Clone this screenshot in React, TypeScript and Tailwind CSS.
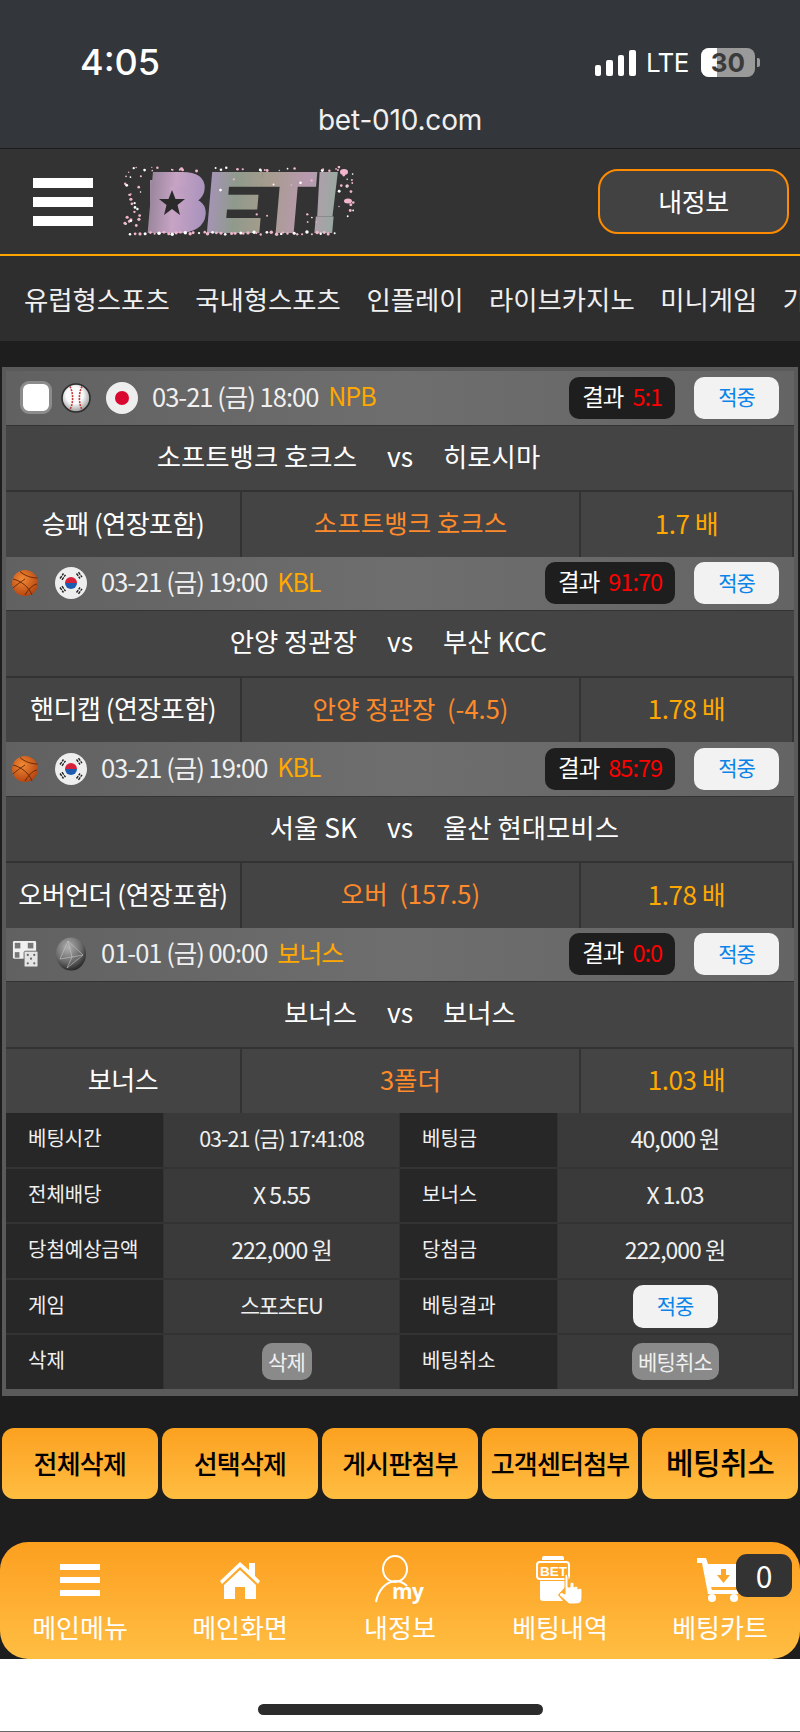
import React from 'react';

const KR = { fontFamily: '"Noto Sans CJK KR", sans-serif' };

type Game = {
  sport: 'baseball' | 'basketball' | 'bonus';
  flag: 'jp' | 'kr' | 'world';
  date: string;
  league: string;
  score: string;
  home: string;
  away: string;
  market: string;
  pick: string;
  odds: string;
  check?: boolean;
};

const GAMES: Game[] = [
  { sport: 'baseball', flag: 'jp', date: '03-21 (금) 18:00', league: 'NPB', score: '5:1', home: '소프트뱅크 호크스', away: '히로시마', market: '승패 (연장포함)', pick: '소프트뱅크 호크스', odds: '1.7 배', check: true },
  { sport: 'basketball', flag: 'kr', date: '03-21 (금) 19:00', league: 'KBL', score: '91:70', home: '안양 정관장', away: '부산 KCC', market: '핸디캡 (연장포함)', pick: '안양 정관장  (-4.5)', odds: '1.78 배' },
  { sport: 'basketball', flag: 'kr', date: '03-21 (금) 19:00', league: 'KBL', score: '85:79', home: '서울 SK', away: '울산 현대모비스', market: '오버언더 (연장포함)', pick: '오버  (157.5)', odds: '1.78 배' },
  { sport: 'bonus', flag: 'world', date: '01-01 (금) 00:00', league: '보너스', score: '0:0', home: '보너스', away: '보너스', market: '보너스', pick: '3폴더', odds: '1.03 배' },
];

const DOTS: [number, number, number][] = (() => {
  const out: [number, number, number][] = [];
  let s = 7;
  const rnd = () => {
    s = (s * 16807) % 2147483647;
    return s / 2147483647;
  };
  for (let i = 0; i < 46; i++) out.push([8 + i * 4.5 + rnd() * 3, 66 + rnd() * 2.5, 1 + rnd() * 0.8]);
  for (let i = 0; i < 30; i++) out.push([6 + rnd() * 220, 1 + rnd() * 4, 0.7 + rnd() * 0.8]);
  for (let i = 0; i < 26; i++) out.push([1 + rnd() * 18, 6 + rnd() * 56, 0.7 + rnd() * 0.9]);
  for (let i = 0; i < 16; i++) out.push([215 + rnd() * 17, 8 + rnd() * 52, 0.7 + rnd() * 1]);
  for (let i = 0; i < 12; i++) out.push([90 + rnd() * 110, 12 + rnd() * 46, 0.7 + rnd() * 0.7]);
  return out;
})();

function Logo() {
  return (
    <svg width="234" height="71" viewBox="0 0 234 71" className="ml-[29px] shrink-0">
      <defs>
        <linearGradient id="photo" gradientUnits="userSpaceOnUse" x1="20" x2="222" y1="0" y2="0">
          <stop offset="0" stopColor="#8f7f93" />
          <stop offset="0.15" stopColor="#c7a3c4" />
          <stop offset="0.3" stopColor="#a993bd" />
          <stop offset="0.45" stopColor="#8f9a8c" />
          <stop offset="0.6" stopColor="#a59c8c" />
          <stop offset="0.8" stopColor="#b99ab0" />
          <stop offset="1" stopColor="#8fae9c" />
        </linearGradient>
        <filter id="soft">
          <feGaussianBlur stdDeviation="0.5" />
        </filter>
      </defs>
      <g filter="url(#soft)">
        <rect x="28" y="14" width="44" height="46" fill="url(#photo)" />
        <text
          x="24"
          y="64"
          fontSize="80"
          fontWeight="700"
          transform="skewX(-5) translate(5 0)"
          fontFamily="Liberation Sans, sans-serif"
          fill="url(#photo)"
          stroke="url(#photo)"
          strokeWidth="6"
          textLength="192"
          lengthAdjust="spacingAndGlyphs"
        >
          BET!
        </text>
        <polygon points="50,24 53.500,33 63,33 55.500,39 58,49 50,43 42,49 44.500,39 37,33 46.500,33" fill="#2b2b2b" />
        {DOTS.map(([x, y, r], i) => (
          <circle key={i} cx={x} cy={y} r={r} fill={i % 3 === 0 ? '#ffffff' : '#f2b6cc'} />
        ))}
        <ellipse cx="222" cy="6" rx="4" ry="3" fill="#f2b6cc" />
        <ellipse cx="226" cy="35" rx="4" ry="2.500" fill="#f2b6cc" />
      </g>
    </svg>
  );
}

function SportIcon({ type }: { type: Game['sport'] }) {
  if (type === 'baseball') {
    return (
      <svg width="30" height="30" viewBox="0 0 30 30" className="shrink-0">
        <defs>
          <radialGradient id="bb" cx="0.45" cy="0.4" r="0.6">
            <stop offset="0.5" stopColor="#fbfbfb" />
            <stop offset="1" stopColor="#9a9a9a" />
          </radialGradient>
        </defs>
        <circle cx="15" cy="15" r="14" fill="url(#bb)" stroke="#2e2e2e" strokeWidth="1.600" />
        <path d="M9 3.500C12.500 10 12.500 20 9 26.500M21 3.500C17.500 10 17.500 20 21 26.500" fill="none" stroke="#c23a3a" strokeWidth="1.600" strokeDasharray="2 1" />
      </svg>
    );
  }
  if (type === 'basketball') {
    return (
      <svg width="26" height="26" viewBox="0 0 26 26" className="shrink-0">
        <defs>
          <radialGradient id="bk" cx="0.4" cy="0.35" r="0.7">
            <stop offset="0" stopColor="#f28a35" />
            <stop offset="1" stopColor="#b2410e" />
          </radialGradient>
        </defs>
        <circle cx="13" cy="13" r="13" fill="url(#bk)" />
        <path d="M1 9C9 11 17 17 20 25M8 1.500C13 6 20 8 25.500 8M1 18C4 15 8 12.500 13 9M13 25C16 20 20 15 25 14" fill="none" stroke="#5d2408" strokeWidth="0.900" />
      </svg>
    );
  }
  return (
    <svg width="26" height="30" viewBox="0 0 28 30" className="shrink-0">
      <rect x="1" y="1" width="25" height="19" rx="1.500" fill="#f0f0f0" />
      <rect x="3" y="3" width="6" height="6" fill="#777777" />
      <rect x="17" y="3" width="6" height="6" fill="#777777" />
      <rect x="3" y="13" width="5" height="6" fill="#777777" />
      <rect x="13" y="12" width="15" height="17" rx="1.500" fill="#e4e4e4" stroke="#666666" strokeWidth="1" />
      <circle cx="17" cy="16" r="1.200" fill="#666666" />
      <circle cx="24" cy="16" r="1.200" fill="#666666" />
      <circle cx="20.500" cy="20" r="1.200" fill="#666666" />
      <circle cx="17" cy="25" r="1.200" fill="#666666" />
      <circle cx="24" cy="25" r="1.200" fill="#666666" />
    </svg>
  );
}

function FlagIcon({ type }: { type: Game['flag'] }) {
  if (type === 'jp') {
    return (
      <svg width="32" height="32" viewBox="0 0 32 32" className="shrink-0">
        <circle cx="16" cy="16" r="16" fill="#eeeeee" />
        <circle cx="16" cy="16" r="7" fill="#d9062f" />
      </svg>
    );
  }
  if (type === 'kr') {
    return (
      <svg width="32" height="32" viewBox="0 0 32 32" className="shrink-0">
        <circle cx="16" cy="16" r="16" fill="#eeeeee" />
        <path d="M10 16a6 6 0 0 1 12 0z" fill="#d5213a" />
        <path d="M10 16a6 6 0 0 0 12 0z" fill="#1c5bb0" />
        <g stroke="#222222" strokeWidth="1.400" strokeDasharray="3 0.800">
          <path d="M5 11.500l3.500-5M7 12.800l3.500-5" />
          <path d="M21.500 6.500l3.500 5M23.500 5.200l3.500 5" />
          <path d="M5 20.500l3.500 5M7 19.200l3.500 5" />
          <path d="M21.500 25.500l3.500-5M23.500 26.800l3.500-5" />
        </g>
      </svg>
    );
  }
  return (
    <svg width="32" height="34" viewBox="0 0 32 34" className="shrink-0">
      <defs>
        <radialGradient id="wb" cx="0.4" cy="0.3" r="0.75">
          <stop offset="0" stopColor="#b0b0b0" />
          <stop offset="0.6" stopColor="#6a6a6a" />
          <stop offset="1" stopColor="#1e1e1e" />
        </radialGradient>
      </defs>
      <ellipse cx="16" cy="17" rx="15" ry="16.500" fill="url(#wb)" />
      <path d="M5 22L13 4L28 18L12 31M13 4L17 20L5 22M17 20L28 18M17 20L12 31" fill="none" stroke="#c8c8c8" strokeWidth="0.600" />
    </svg>
  );
}

function HitButton({ className }: { className: string }) {
  return (
    <div className={`flex items-center justify-center rounded-[10px] bg-[#f2f2f2] pb-[2px] text-[21px] tracking-[-1px] text-[#0a84e8] ${className}`}>
      적중
    </div>
  );
}

function GameBlock({ game }: { game: Game }) {
  return (
    <div>
      <div className="flex h-[53.500px] items-center bg-linear-to-r from-[#616161] via-[#6e6e6e] to-[#646464]">
        {game.check ? (
          <div className="ml-[14px] mr-[9px] h-[33px] w-[32px] shrink-0 rounded-[9px] border-[3px] border-[#8c8c8c] bg-white" />
        ) : (
          <div className="ml-[5px] w-[1px] shrink-0" />
        )}
        <SportIcon type={game.sport} />
        <div className={game.check ? 'ml-[15px]' : 'ml-[17px]'}>
          <FlagIcon type={game.flag} />
        </div>
        <span className="ml-[14px] mb-[4px] whitespace-nowrap text-[25.500px] tracking-[-1px] text-[#f0f0f0]">{game.date}</span>
        <span className="ml-[10px] mb-[4px] whitespace-nowrap text-[25px] tracking-[-1px] text-[#ffa800]">{game.league}</span>
        <div className="ml-auto flex h-[42px] items-center rounded-[10px] bg-[#1e1e1e] px-[13px] pb-[3px] text-[23.500px] tracking-[-1px]">
          <span className="text-white">결과</span>
          <span className="ml-[9px] text-[#ff0000]">{game.score}</span>
        </div>
        <HitButton className="ml-[19px] mr-[15px] h-[42px] w-[85px]" />
      </div>
      <div className="flex flex-col gap-[2px] bg-[#333333] pt-[1px]">
        <div className="grid h-[64.500px] grid-cols-[1fr_auto_1fr] items-center gap-x-[30px] bg-[#444444] pb-[4px] text-[26.400px] whitespace-nowrap text-white">
          <span className="text-right">{game.home}</span>
          <span>vs</span>
          <span>{game.away}</span>
        </div>
        <div className="grid h-[64.500px] grid-cols-[234px_337px_211px] gap-x-[2px] text-[26px]">
          <div className="flex items-center justify-center bg-[#444444] pb-[4px] tracking-[-0.5px] whitespace-nowrap text-white">{game.market}</div>
          <div className="flex items-center justify-center whitespace-pre bg-[#444444] pb-[4px] text-[25.500px] text-[#ff8a2a]">{game.pick}</div>
          <div className="flex items-center justify-center bg-[#444444] pb-[4px] tracking-[-0.5px] text-[#ffa800]">{game.odds}</div>
        </div>
      </div>
    </div>
  );
}

function TableRow({ a, b, c, d }: { a: string; b: React.ReactNode; c: string; d: React.ReactNode }) {
  const label = 'flex items-center bg-[#272727] pb-[3px] pl-[22px] text-[20px] whitespace-nowrap';
  const value = 'flex items-center justify-center bg-[#3a3a3a] text-[23px] tracking-[-1px] whitespace-nowrap';
  return (
    <div className="grid h-[53.500px] grid-cols-[157px_235px_157px_234px] gap-x-[1px] text-[#f0f0f0]">
      <div className={label}>{a}</div>
      <div className={value}>{b}</div>
      <div className={label}>{c}</div>
      <div className={value}>{d}</div>
    </div>
  );
}

function GrayButton({ children, className }: { children: React.ReactNode; className: string }) {
  return <div className={`flex h-[37px] items-center justify-center rounded-[10px] bg-[#8a8a8a] text-[21px] tracking-[-0.8px] ${className}`}>{children}</div>;
}

function NavIcon({ name }: { name: string }) {
  if (name === 'menu') {
    return (
      <svg width="40" height="34" viewBox="0 0 40 34" fill="#ffffff">
        <rect y="1" width="40" height="6" />
        <rect y="14" width="40" height="6" />
        <rect y="27" width="40" height="6" />
      </svg>
    );
  }
  if (name === 'home') {
    return (
      <svg width="40" height="40" viewBox="0 0 40 40" fill="#ffffff">
        <path d="M20 2L29 10V3H35V16L40 21L38 24L20 7L2 24L0 21Z" />
        <path d="M4 25L20 10L36 25V39H25V27H15V39H4Z" />
      </svg>
    );
  }
  if (name === 'my') {
    return (
      <svg width="50" height="50" viewBox="0 0 50 50">
        <ellipse cx="20" cy="14" rx="12" ry="13" fill="none" stroke="#ffffff" strokeWidth="2" />
        <path d="M1 47C3 36 10 27 20 26C25 26 29 28 32 31" fill="none" stroke="#ffffff" strokeWidth="2" />
        <text x="17" y="44" fontSize="21" fontWeight="700" fill="#ffffff" fontFamily="Open Sans, sans-serif" letterSpacing="-0.5">
          my
        </text>
      </svg>
    );
  }
  if (name === 'bet') {
    return (
      <svg width="48" height="50" viewBox="0 0 48 50">
        <path d="M6 3Q6 1 8 1H26Q28 1 28 3V5H6Z" fill="#ffffff" />
        <rect x="1" y="7" width="32" height="17" rx="3" fill="none" stroke="#ffffff" strokeWidth="2" />
        <text x="4" y="21" fontSize="13.500" fontWeight="700" fill="#ffffff" fontFamily="Liberation Sans, sans-serif">
          BET
        </text>
        <path d="M4 26H30V31L22 40L27 46H7Q4 46 4 43Z" fill="#ffffff" />
        <path d="M29 19Q32 19 32 22V32L34 32V28Q36 26 38 28V32Q40 30 42 32V34Q44 32 46 34V43Q46 49 40 49H33L23 40L25 37L29 39Z" fill="#ffffff" stroke="#fca728" strokeWidth="1" />
      </svg>
    );
  }
  return (
    <svg width="46" height="44" viewBox="0 0 46 44" fill="#ffffff">
      <path d="M0 0H9L11 6H46V11L41 29H14L15 32H41V36H11L5 5H0Z" />
      <circle cx="15" cy="40" r="4" />
      <circle cx="37" cy="40" r="4" />
      <path d="M24 11H29V17H33L26.500 25L20 17H24Z" fill="#fca728" />
    </svg>
  );
}

const NAV = ['유럽형스포츠', '국내형스포츠', '인플레이', '라이브카지노', '미니게임', '가상게임'];
const ACTIONS = ['전체삭제', '선택삭제', '게시판첨부', '고객센터첨부'];
const BOTTOM = [
  { icon: 'menu', label: '메인메뉴' },
  { icon: 'home', label: '메인화면' },
  { icon: 'my', label: '내정보' },
  { icon: 'bet', label: '베팅내역' },
  { icon: 'cart', label: '베팅카트' },
];

export default function App() {
  return (
    <div className="flex h-[1732px] w-[800px] flex-col overflow-hidden bg-white" style={KR}>
      {/* status bar */}
      <div className="h-[149px] shrink-0 border-b border-[#1c1c1c] bg-[#33363a] font-['Inter',sans-serif]">
        <div className="flex h-[84px] items-end">
          <span className="ml-[80px] text-[36px] leading-[44px] font-medium text-white">4:05</span>
          <div className="ml-auto mb-[8px] flex items-end gap-[5px]">
            <div className="h-[11px] w-[6.500px] rounded-[2px] bg-white" />
            <div className="h-[16px] w-[6.500px] rounded-[2px] bg-white" />
            <div className="h-[21px] w-[6.500px] rounded-[2px] bg-white" />
            <div className="h-[26px] w-[6.500px] rounded-[2px] bg-white" />
          </div>
          <span className="mb-[4px] ml-[10px] text-[26px] leading-[34px] tracking-[-0.5px] text-white">LTE</span>
          <div className="relative mb-[7px] ml-[12px] flex h-[29px] w-[54px] items-center justify-center overflow-hidden rounded-[8px] bg-[#9a9a9a] text-[26px] font-bold text-[#3a3a3a]">
            <div className="absolute top-0 bottom-0 left-0 w-[16px] bg-white" />
            <span className="relative">30</span>
          </div>
          <div className="mb-[17px] ml-[2px] mr-[40px] h-[9px] w-[3px] rounded-r-[2px] bg-[#9a9a9a]" />
        </div>
        <div className="mt-[18px] text-center text-[28px] leading-[36px] tracking-[-0.2px] text-[#f0f0f0]">bet-010.com</div>
      </div>

      {/* header */}
      <div className="flex h-[107px] shrink-0 items-center border-b-[2px] border-[#ffa500] bg-[#333333]">
        <div className="ml-[33px] flex w-[60px] shrink-0 flex-col gap-[9px]">
          <div className="h-[10px] bg-white" />
          <div className="h-[10px] bg-white" />
          <div className="h-[10px] bg-white" />
        </div>
        <Logo />
        <div className="ml-auto mr-[11px] flex h-[65px] w-[191px] items-center justify-center rounded-[20px] border-[2.500px] border-[#ff8c00] bg-[#424242] pb-[2px] text-[26px] tracking-[-0.5px] text-white">
          내정보
        </div>
      </div>

      {/* nav */}
      <div className="flex h-[85px] shrink-0 items-center gap-[25.500px] overflow-hidden whitespace-nowrap bg-[#2e2e2e] pl-[24px] text-[26.400px] text-[#f0f0f0]">
        {NAV.map(n => (
          <span key={n}>{n}</span>
        ))}
      </div>

      {/* page */}
      <div className="flex h-[1318px] shrink-0 flex-col bg-[#1e1e1e]">
        <div className="mx-[2px] mt-[26px] bg-[#5a5a5a] px-[4px] pt-[4px] pb-[7px]">
          {GAMES.map((g, i) => (
            <GameBlock key={i} game={g} />
          ))}
          <div className="flex flex-col gap-[2px] bg-[#333333]">
            <TableRow a="베팅시간" b={<span className="mb-[3px] text-[21.500px]">03-21 (금) 17:41:08</span>} c="베팅금" d={<span className="mb-[3px]">40,000 원</span>} />
            <TableRow a="전체배당" b={<span className="mb-[3px]">X 5.55</span>} c="보너스" d={<span className="mb-[3px]">X 1.03</span>} />
            <TableRow a="당첨예상금액" b={<span className="mb-[3px]">222,000 원</span>} c="당첨금" d={<span className="mb-[3px]">222,000 원</span>} />
            <TableRow a="게임" b={<span className="mb-[3px] text-[21.500px]">스포츠EU</span>} c="베팅결과" d={<HitButton className="h-[43px] w-[85px]" />} />
            <TableRow
              a="삭제"
              b={<GrayButton className="ml-[10px] w-[50px]">삭제</GrayButton>}
              c="베팅취소"
              d={<GrayButton className="w-[87px]">베팅취소</GrayButton>}
            />
          </div>
        </div>

        <div className="mx-[2px] mt-[32px] grid h-[72px] grid-cols-5 gap-x-[4.500px]">
          {ACTIONS.map(a => (
            <div key={a} className="flex items-center justify-center rounded-[12px] bg-linear-to-b from-[#fca120] to-[#ffbd40] pb-[2px] text-[26px] font-medium tracking-[-0.8px] whitespace-nowrap text-black">
              {a}
            </div>
          ))}
          <div className="flex items-center justify-center rounded-[12px] bg-linear-to-b from-[#fca120] to-[#ffbd40] pb-[4px] text-[30px] font-medium tracking-[-0.5px] whitespace-nowrap text-black">
            베팅취소
          </div>
        </div>

        <div className="relative mt-[43px] grid h-[117px] grid-cols-5 rounded-[28px] bg-linear-to-b from-[#fc9f1e] to-[#ffbe42]">
          {BOTTOM.map(b => (
            <div key={b.icon}>
              <div className="flex h-[67px] items-center justify-center pt-[9px]">
                <NavIcon name={b.icon} />
              </div>
              <div className="text-center text-[26px] leading-[36px] whitespace-nowrap text-white">{b.label}</div>
            </div>
          ))}
          <div className="absolute top-[12px] right-[8px] flex h-[43px] w-[56px] items-center justify-center rounded-[11px] bg-[#333333] text-[30px] text-white">
            0
          </div>
        </div>
      </div>

      {/* home indicator */}
      <div className="flex h-[73px] shrink-0 items-start justify-center border-b border-[#666666] bg-white pt-[45px]">
        <div className="h-[11px] w-[285px] rounded-full bg-[#2b2b2b]" />
      </div>
    </div>
  );
}
